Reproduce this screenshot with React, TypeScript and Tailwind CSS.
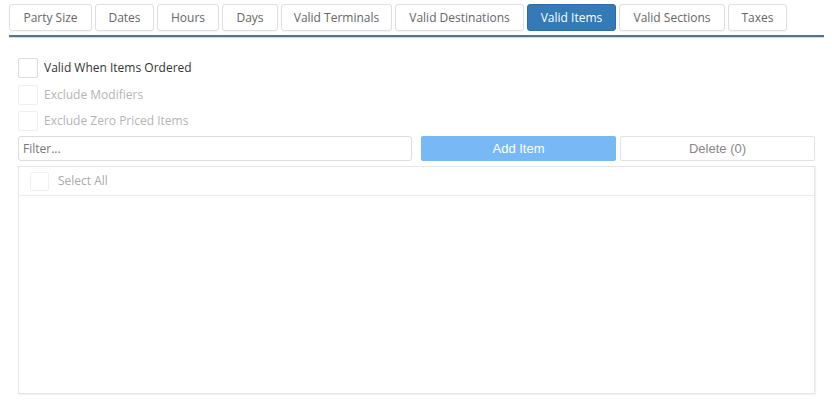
import React from 'react';

const tabs: { label: string; w: string; active?: boolean }[] = [
  { label: 'Party Size', w: 'w-[83px]' },
  { label: 'Dates', w: 'w-[59px]' },
  { label: 'Hours', w: 'w-[62px]' },
  { label: 'Days', w: 'w-[56px]' },
  { label: 'Valid Terminals', w: 'w-[111px]' },
  { label: 'Valid Destinations', w: 'w-[129px]' },
  { label: 'Valid Items', w: 'w-[89px]', active: true },
  { label: 'Valid Sections', w: 'w-[106px]' },
  { label: 'Taxes', w: 'w-[59px]' },
];

const Check: React.FC<{ label: string; disabled?: boolean }> = ({ label, disabled }) => (
  <label className="flex items-center h-[20px] gap-[6px]">
    <span
      className={
        'w-[20px] h-[20px] rounded-[2px] border bg-white ' +
        (disabled ? 'border-[#f0f0f0]' : 'border-[#dcdcdc]')
      }
    />
    <span className={disabled ? 'text-[#b4b4b4]' : 'text-[#333]'}>{label}</span>
  </label>
);

export default function App() {
  return (
    <div className="w-[832px] h-[407px] bg-white pl-[9px] pr-[8px] pt-[4px] font-['Open_Sans','Noto_Sans',sans-serif] text-[12px]">
      <div className="flex gap-[3px] h-[27px]">
        {tabs.map((t) => (
          <div
            key={t.label}
            className={
              t.w +
              ' h-full flex items-center justify-center rounded-[3px] border ' +
              (t.active
                ? 'bg-[#337ab7] border-[#2e6da4] text-white'
                : 'bg-white border-[#dedede] text-[#666] shadow-[0_1px_1px_rgba(0,0,0,0.04)]')
            }
          >
            {t.label}
          </div>
        ))}
      </div>
      <div className="mt-[4px] h-[3px] border-t-2 border-[#56738b] border-b border-b-[#c9dbe8]" />

      <div className="px-[9px] pt-[20px]">
        <div className="flex flex-col gap-[6.5px]">
          <Check label="Valid When Items Ordered" />
          <Check label="Exclude Modifiers" disabled />
          <Check label="Exclude Zero Priced Items" disabled />
        </div>

        <div className="flex mt-[5px] h-[25px]">
          <input
            placeholder="Filter..."
            className="w-[394px] h-full border border-[#dcdcdc] rounded-[3px] px-[4px] text-[12px] outline-none placeholder:text-[#777]"
          />
          <button className="ml-[9px] w-[195px] h-full rounded-[2px] bg-[#78b9f5] text-white font-['Liberation_Sans',Arial,sans-serif] text-[13px]">
            Add Item
          </button>
          <button className="ml-[4px] w-[195px] h-full rounded-[2px] border border-[#e3e3e3] bg-white text-[#888] font-['Liberation_Sans',Arial,sans-serif] text-[13px]">
            Delete (0)
          </button>
        </div>

        <div className="mt-[5px] w-[797px] h-[228px] border border-[#e6e6e6] shadow-[1px_1px_1px_rgba(0,0,0,0.05)]">
          <div className="h-[29px] border-b border-[#ececec] flex items-center pl-[11px] gap-[9px]">
            <span className="w-[19px] h-[19px] rounded-[2px] border border-[#f0f0f0]" />
            <span className="text-[#aaa]">Select All</span>
          </div>
        </div>
      </div>
    </div>
  );
}
